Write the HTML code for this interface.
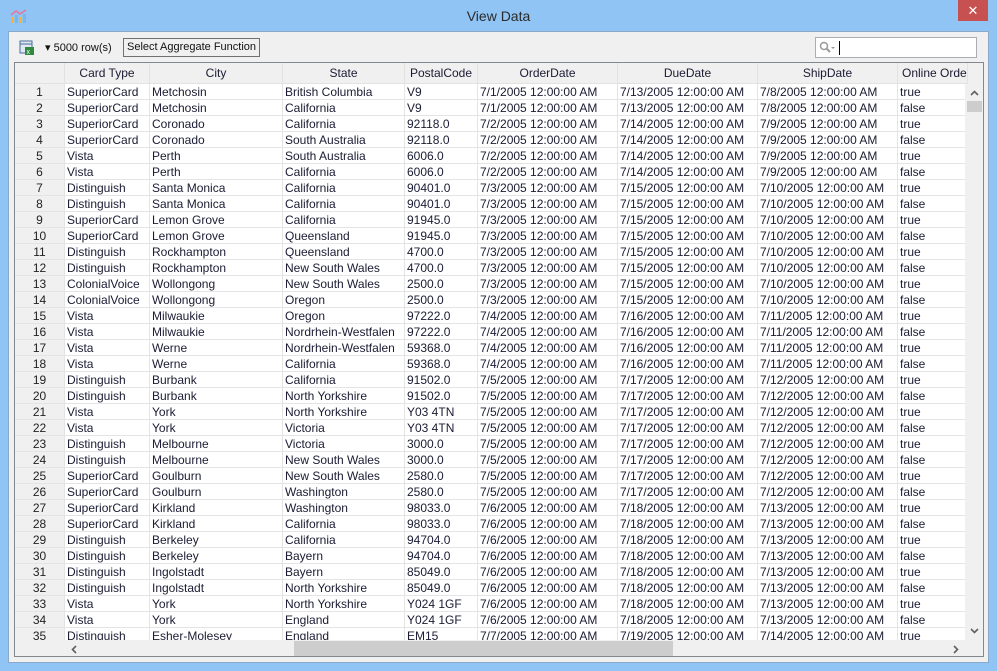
<!DOCTYPE html>
<html><head><style>
*{margin:0;padding:0;box-sizing:border-box}
body{width:997px;height:671px;background:#8fc4f4;font-family:"Liberation Sans",Arial,sans-serif;font-size:12px;position:relative;overflow:hidden;color:#1b1b33}
.title{position:absolute;left:0;top:0;width:997px;height:31px;text-align:center;line-height:33px;font-size:14px;color:#2b2b2b}
.close{position:absolute;left:958px;top:0;width:30px;height:21px;background:#c75050;color:#fff;text-align:center;line-height:21px;font-size:13px}
.inner{position:absolute;left:8px;top:31px;width:981px;height:632px;background:#f0f0f0;border:1px solid #8aa9c8}
.grid{position:absolute;left:14px;top:62px;width:970px;height:595px;border:1px solid #828790;background:#f0f0f0;overflow:hidden}
.hdr{position:absolute;left:0;top:0;height:21px;white-space:nowrap;background:#f0f0f0}
.hdr span{display:inline-block;height:21px;line-height:21px;text-align:center;border-right:1px solid #e2e2e2;border-bottom:1px solid #e2e2e2;vertical-align:top;overflow:hidden}
.rows{position:absolute;left:0;top:21px;width:950px;height:556px;overflow:hidden}
.r{height:16px;white-space:nowrap;line-height:16px}
.r span{display:inline-block;height:16px;background:#fff;border-right:1px solid #e4e4e4;border-bottom:1px solid #e4e4e4;padding-left:2px;vertical-align:top;overflow:hidden}
.r span:first-child{background:#f0f0f0;text-align:center;padding-left:0;color:#222}
.c0{width:50px}.c1{width:85px}.c2{width:133px}.c3{width:122px}.c4{width:73px}.c5{width:140px}.c6{width:140px}.c7{width:140px}.c8{width:70px}
.vs{position:absolute;left:951px;top:21px;width:17px;height:556px;background:#f0f0f0}
.hs{position:absolute;left:0;top:577px;width:968px;height:17px;background:#f0f0f0}
</style></head><body>
<div class="title">View Data</div>
<svg style="position:absolute;left:10px;top:8px" width="18" height="16"><rect x="1" y="9" width="3" height="6" fill="#f3b33d"/><rect x="5" y="7" width="3" height="8" fill="#79b7e8"/><rect x="9" y="9" width="3" height="6" fill="#f3b33d"/><rect x="13" y="6" width="3" height="9" fill="#79b7e8"/><polyline points="1,7 6,3 10,6 16,2" fill="none" stroke="#e9739a" stroke-width="1.5"/></svg>
<div class="close">✕</div>
<div class="inner"></div>
<svg style="position:absolute;left:19px;top:40px" width="16" height="16"><rect x="1" y="1" width="12" height="12" fill="#dfe8f2" stroke="#4a6c9a"/><line x1="1" y1="4" x2="13" y2="4" stroke="#4a6c9a"/><rect x="6" y="7" width="9" height="8" fill="#2f8a3f"/><text x="7.5" y="14" font-size="7" fill="#fff" font-family="Liberation Sans">x</text></svg>
<div style="position:absolute;left:45px;top:41px;font-size:11px;color:#111;white-space:nowrap">▾ 5000 row(s)</div>
<div style="position:absolute;left:123px;top:38px;width:137px;height:19px;border:1px solid #707070;background:#f0f0f0;font-size:11px;line-height:17px;text-align:center;color:#111;white-space:nowrap">Select Aggregate Function</div>
<div style="position:absolute;left:815px;top:37px;width:162px;height:21px;border:1px solid #abadb3;background:#fff"><svg style="position:absolute;left:3px;top:3px" width="18" height="14"><circle cx="5" cy="5" r="3.5" fill="none" stroke="#999" stroke-width="1.5"/><line x1="7.5" y1="7.5" x2="11" y2="11" stroke="#999" stroke-width="2"/><polygon points="12,6 16,6 14,8" fill="#999"/></svg><div style="position:absolute;left:23px;top:3px;width:1px;height:14px;background:#000"></div></div>
<div class="grid">
<div class="hdr"><span class="c0"></span><span class="c1">Card Type</span><span class="c2">City</span><span class="c3">State</span><span class="c4">PostalCode</span><span class="c5">OrderDate</span><span class="c6">DueDate</span><span class="c7">ShipDate</span><span class="c8" style="text-align:left;padding-left:4px">Online Order</span></div>
<div class="rows">
<div class="r"><span class="c0">1</span><span class="c1">SuperiorCard</span><span class="c2">Metchosin</span><span class="c3">British Columbia</span><span class="c4">V9</span><span class="c5">7/1/2005 12:00:00 AM</span><span class="c6">7/13/2005 12:00:00 AM</span><span class="c7">7/8/2005 12:00:00 AM</span><span class="c8">true</span></div>
<div class="r"><span class="c0">2</span><span class="c1">SuperiorCard</span><span class="c2">Metchosin</span><span class="c3">California</span><span class="c4">V9</span><span class="c5">7/1/2005 12:00:00 AM</span><span class="c6">7/13/2005 12:00:00 AM</span><span class="c7">7/8/2005 12:00:00 AM</span><span class="c8">false</span></div>
<div class="r"><span class="c0">3</span><span class="c1">SuperiorCard</span><span class="c2">Coronado</span><span class="c3">California</span><span class="c4">92118.0</span><span class="c5">7/2/2005 12:00:00 AM</span><span class="c6">7/14/2005 12:00:00 AM</span><span class="c7">7/9/2005 12:00:00 AM</span><span class="c8">true</span></div>
<div class="r"><span class="c0">4</span><span class="c1">SuperiorCard</span><span class="c2">Coronado</span><span class="c3">South Australia</span><span class="c4">92118.0</span><span class="c5">7/2/2005 12:00:00 AM</span><span class="c6">7/14/2005 12:00:00 AM</span><span class="c7">7/9/2005 12:00:00 AM</span><span class="c8">false</span></div>
<div class="r"><span class="c0">5</span><span class="c1">Vista</span><span class="c2">Perth</span><span class="c3">South Australia</span><span class="c4">6006.0</span><span class="c5">7/2/2005 12:00:00 AM</span><span class="c6">7/14/2005 12:00:00 AM</span><span class="c7">7/9/2005 12:00:00 AM</span><span class="c8">true</span></div>
<div class="r"><span class="c0">6</span><span class="c1">Vista</span><span class="c2">Perth</span><span class="c3">California</span><span class="c4">6006.0</span><span class="c5">7/2/2005 12:00:00 AM</span><span class="c6">7/14/2005 12:00:00 AM</span><span class="c7">7/9/2005 12:00:00 AM</span><span class="c8">false</span></div>
<div class="r"><span class="c0">7</span><span class="c1">Distinguish</span><span class="c2">Santa Monica</span><span class="c3">California</span><span class="c4">90401.0</span><span class="c5">7/3/2005 12:00:00 AM</span><span class="c6">7/15/2005 12:00:00 AM</span><span class="c7">7/10/2005 12:00:00 AM</span><span class="c8">true</span></div>
<div class="r"><span class="c0">8</span><span class="c1">Distinguish</span><span class="c2">Santa Monica</span><span class="c3">California</span><span class="c4">90401.0</span><span class="c5">7/3/2005 12:00:00 AM</span><span class="c6">7/15/2005 12:00:00 AM</span><span class="c7">7/10/2005 12:00:00 AM</span><span class="c8">false</span></div>
<div class="r"><span class="c0">9</span><span class="c1">SuperiorCard</span><span class="c2">Lemon Grove</span><span class="c3">California</span><span class="c4">91945.0</span><span class="c5">7/3/2005 12:00:00 AM</span><span class="c6">7/15/2005 12:00:00 AM</span><span class="c7">7/10/2005 12:00:00 AM</span><span class="c8">true</span></div>
<div class="r"><span class="c0">10</span><span class="c1">SuperiorCard</span><span class="c2">Lemon Grove</span><span class="c3">Queensland</span><span class="c4">91945.0</span><span class="c5">7/3/2005 12:00:00 AM</span><span class="c6">7/15/2005 12:00:00 AM</span><span class="c7">7/10/2005 12:00:00 AM</span><span class="c8">false</span></div>
<div class="r"><span class="c0">11</span><span class="c1">Distinguish</span><span class="c2">Rockhampton</span><span class="c3">Queensland</span><span class="c4">4700.0</span><span class="c5">7/3/2005 12:00:00 AM</span><span class="c6">7/15/2005 12:00:00 AM</span><span class="c7">7/10/2005 12:00:00 AM</span><span class="c8">true</span></div>
<div class="r"><span class="c0">12</span><span class="c1">Distinguish</span><span class="c2">Rockhampton</span><span class="c3">New South Wales</span><span class="c4">4700.0</span><span class="c5">7/3/2005 12:00:00 AM</span><span class="c6">7/15/2005 12:00:00 AM</span><span class="c7">7/10/2005 12:00:00 AM</span><span class="c8">false</span></div>
<div class="r"><span class="c0">13</span><span class="c1">ColonialVoice</span><span class="c2">Wollongong</span><span class="c3">New South Wales</span><span class="c4">2500.0</span><span class="c5">7/3/2005 12:00:00 AM</span><span class="c6">7/15/2005 12:00:00 AM</span><span class="c7">7/10/2005 12:00:00 AM</span><span class="c8">true</span></div>
<div class="r"><span class="c0">14</span><span class="c1">ColonialVoice</span><span class="c2">Wollongong</span><span class="c3">Oregon</span><span class="c4">2500.0</span><span class="c5">7/3/2005 12:00:00 AM</span><span class="c6">7/15/2005 12:00:00 AM</span><span class="c7">7/10/2005 12:00:00 AM</span><span class="c8">false</span></div>
<div class="r"><span class="c0">15</span><span class="c1">Vista</span><span class="c2">Milwaukie</span><span class="c3">Oregon</span><span class="c4">97222.0</span><span class="c5">7/4/2005 12:00:00 AM</span><span class="c6">7/16/2005 12:00:00 AM</span><span class="c7">7/11/2005 12:00:00 AM</span><span class="c8">true</span></div>
<div class="r"><span class="c0">16</span><span class="c1">Vista</span><span class="c2">Milwaukie</span><span class="c3">Nordrhein-Westfalen</span><span class="c4">97222.0</span><span class="c5">7/4/2005 12:00:00 AM</span><span class="c6">7/16/2005 12:00:00 AM</span><span class="c7">7/11/2005 12:00:00 AM</span><span class="c8">false</span></div>
<div class="r"><span class="c0">17</span><span class="c1">Vista</span><span class="c2">Werne</span><span class="c3">Nordrhein-Westfalen</span><span class="c4">59368.0</span><span class="c5">7/4/2005 12:00:00 AM</span><span class="c6">7/16/2005 12:00:00 AM</span><span class="c7">7/11/2005 12:00:00 AM</span><span class="c8">true</span></div>
<div class="r"><span class="c0">18</span><span class="c1">Vista</span><span class="c2">Werne</span><span class="c3">California</span><span class="c4">59368.0</span><span class="c5">7/4/2005 12:00:00 AM</span><span class="c6">7/16/2005 12:00:00 AM</span><span class="c7">7/11/2005 12:00:00 AM</span><span class="c8">false</span></div>
<div class="r"><span class="c0">19</span><span class="c1">Distinguish</span><span class="c2">Burbank</span><span class="c3">California</span><span class="c4">91502.0</span><span class="c5">7/5/2005 12:00:00 AM</span><span class="c6">7/17/2005 12:00:00 AM</span><span class="c7">7/12/2005 12:00:00 AM</span><span class="c8">true</span></div>
<div class="r"><span class="c0">20</span><span class="c1">Distinguish</span><span class="c2">Burbank</span><span class="c3">North Yorkshire</span><span class="c4">91502.0</span><span class="c5">7/5/2005 12:00:00 AM</span><span class="c6">7/17/2005 12:00:00 AM</span><span class="c7">7/12/2005 12:00:00 AM</span><span class="c8">false</span></div>
<div class="r"><span class="c0">21</span><span class="c1">Vista</span><span class="c2">York</span><span class="c3">North Yorkshire</span><span class="c4">Y03 4TN</span><span class="c5">7/5/2005 12:00:00 AM</span><span class="c6">7/17/2005 12:00:00 AM</span><span class="c7">7/12/2005 12:00:00 AM</span><span class="c8">true</span></div>
<div class="r"><span class="c0">22</span><span class="c1">Vista</span><span class="c2">York</span><span class="c3">Victoria</span><span class="c4">Y03 4TN</span><span class="c5">7/5/2005 12:00:00 AM</span><span class="c6">7/17/2005 12:00:00 AM</span><span class="c7">7/12/2005 12:00:00 AM</span><span class="c8">false</span></div>
<div class="r"><span class="c0">23</span><span class="c1">Distinguish</span><span class="c2">Melbourne</span><span class="c3">Victoria</span><span class="c4">3000.0</span><span class="c5">7/5/2005 12:00:00 AM</span><span class="c6">7/17/2005 12:00:00 AM</span><span class="c7">7/12/2005 12:00:00 AM</span><span class="c8">true</span></div>
<div class="r"><span class="c0">24</span><span class="c1">Distinguish</span><span class="c2">Melbourne</span><span class="c3">New South Wales</span><span class="c4">3000.0</span><span class="c5">7/5/2005 12:00:00 AM</span><span class="c6">7/17/2005 12:00:00 AM</span><span class="c7">7/12/2005 12:00:00 AM</span><span class="c8">false</span></div>
<div class="r"><span class="c0">25</span><span class="c1">SuperiorCard</span><span class="c2">Goulburn</span><span class="c3">New South Wales</span><span class="c4">2580.0</span><span class="c5">7/5/2005 12:00:00 AM</span><span class="c6">7/17/2005 12:00:00 AM</span><span class="c7">7/12/2005 12:00:00 AM</span><span class="c8">true</span></div>
<div class="r"><span class="c0">26</span><span class="c1">SuperiorCard</span><span class="c2">Goulburn</span><span class="c3">Washington</span><span class="c4">2580.0</span><span class="c5">7/5/2005 12:00:00 AM</span><span class="c6">7/17/2005 12:00:00 AM</span><span class="c7">7/12/2005 12:00:00 AM</span><span class="c8">false</span></div>
<div class="r"><span class="c0">27</span><span class="c1">SuperiorCard</span><span class="c2">Kirkland</span><span class="c3">Washington</span><span class="c4">98033.0</span><span class="c5">7/6/2005 12:00:00 AM</span><span class="c6">7/18/2005 12:00:00 AM</span><span class="c7">7/13/2005 12:00:00 AM</span><span class="c8">true</span></div>
<div class="r"><span class="c0">28</span><span class="c1">SuperiorCard</span><span class="c2">Kirkland</span><span class="c3">California</span><span class="c4">98033.0</span><span class="c5">7/6/2005 12:00:00 AM</span><span class="c6">7/18/2005 12:00:00 AM</span><span class="c7">7/13/2005 12:00:00 AM</span><span class="c8">false</span></div>
<div class="r"><span class="c0">29</span><span class="c1">Distinguish</span><span class="c2">Berkeley</span><span class="c3">California</span><span class="c4">94704.0</span><span class="c5">7/6/2005 12:00:00 AM</span><span class="c6">7/18/2005 12:00:00 AM</span><span class="c7">7/13/2005 12:00:00 AM</span><span class="c8">true</span></div>
<div class="r"><span class="c0">30</span><span class="c1">Distinguish</span><span class="c2">Berkeley</span><span class="c3">Bayern</span><span class="c4">94704.0</span><span class="c5">7/6/2005 12:00:00 AM</span><span class="c6">7/18/2005 12:00:00 AM</span><span class="c7">7/13/2005 12:00:00 AM</span><span class="c8">false</span></div>
<div class="r"><span class="c0">31</span><span class="c1">Distinguish</span><span class="c2">Ingolstadt</span><span class="c3">Bayern</span><span class="c4">85049.0</span><span class="c5">7/6/2005 12:00:00 AM</span><span class="c6">7/18/2005 12:00:00 AM</span><span class="c7">7/13/2005 12:00:00 AM</span><span class="c8">true</span></div>
<div class="r"><span class="c0">32</span><span class="c1">Distinguish</span><span class="c2">Ingolstadt</span><span class="c3">North Yorkshire</span><span class="c4">85049.0</span><span class="c5">7/6/2005 12:00:00 AM</span><span class="c6">7/18/2005 12:00:00 AM</span><span class="c7">7/13/2005 12:00:00 AM</span><span class="c8">false</span></div>
<div class="r"><span class="c0">33</span><span class="c1">Vista</span><span class="c2">York</span><span class="c3">North Yorkshire</span><span class="c4">Y024 1GF</span><span class="c5">7/6/2005 12:00:00 AM</span><span class="c6">7/18/2005 12:00:00 AM</span><span class="c7">7/13/2005 12:00:00 AM</span><span class="c8">true</span></div>
<div class="r"><span class="c0">34</span><span class="c1">Vista</span><span class="c2">York</span><span class="c3">England</span><span class="c4">Y024 1GF</span><span class="c5">7/6/2005 12:00:00 AM</span><span class="c6">7/18/2005 12:00:00 AM</span><span class="c7">7/13/2005 12:00:00 AM</span><span class="c8">false</span></div>
<div class="r"><span class="c0">35</span><span class="c1">Distinguish</span><span class="c2">Esher-Molesey</span><span class="c3">England</span><span class="c4">EM15</span><span class="c5">7/7/2005 12:00:00 AM</span><span class="c6">7/19/2005 12:00:00 AM</span><span class="c7">7/14/2005 12:00:00 AM</span><span class="c8">true</span></div>
</div>
<div class="vs"><svg style="position:absolute;left:4px;top:6px" width="9" height="6"><polyline points="1,5 4.5,1.5 8,5" fill="none" stroke="#606060" stroke-width="1.6"/></svg><div style="position:absolute;left:1px;top:17px;width:15px;height:11px;background:#cdcdcd"></div><svg style="position:absolute;left:4px;top:544px" width="9" height="6"><polyline points="1,1 4.5,4.5 8,1" fill="none" stroke="#606060" stroke-width="1.6"/></svg></div>
<div class="hs"><svg style="position:absolute;left:56px;top:5px" width="6" height="9"><polyline points="5,1 1.5,4.5 5,8" fill="none" stroke="#606060" stroke-width="1.6"/></svg><div style="position:absolute;left:279px;top:1px;width:379px;height:15px;background:#cdcdcd"></div><svg style="position:absolute;left:938px;top:5px" width="6" height="9"><polyline points="1,1 4.5,4.5 1,8" fill="none" stroke="#606060" stroke-width="1.6"/></svg></div>
</div>
</body></html>
